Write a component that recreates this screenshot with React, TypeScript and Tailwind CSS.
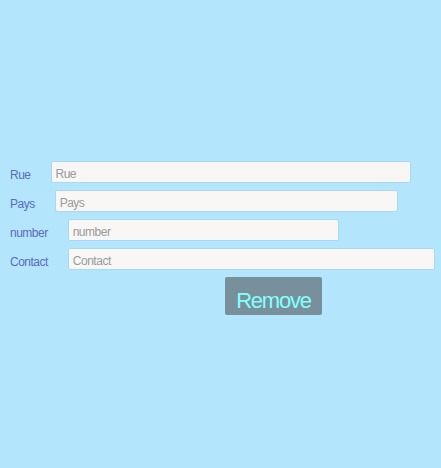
import React from "react";

const rows = [
  { label: "Rue", w: "w-[360px]" },
  { label: "Pays", w: "w-[343px]" },
  { label: "number", w: "w-[271px]" },
  { label: "Contact", w: "w-[367px]" },
];

export default function App() {
  return (
    <div className="w-[441px] h-[468px] bg-[#b3e5fc] font-['Liberation_Sans',Arial,sans-serif] pt-[161px]">
      <div className="flex flex-col gap-[7px] pl-[10px]">
        {rows.map((r) => (
          <div key={r.label} className="flex items-center h-[22px]">
            <span className="text-[12px] tracking-[-0.5px] text-[#5c6bc0] mr-[20px] leading-none pt-[5px]">{r.label}</span>
            <input
              placeholder={r.label}
              className={`${r.w} h-[22px] bg-[#f8f7f5] border border-[#a9d9f1] rounded-[2px] pl-[4px] pt-[4px] text-[12px] tracking-[-0.5px] text-[#555] placeholder:text-[#9a9a9a] outline-none`}
            />
          </div>
        ))}
      </div>
      <div className="pl-[225px] mt-[7px]">
        <button className="w-[97px] h-[38px] bg-[#78909c] rounded-[2px] text-[#84ffff] text-[22px] tracking-[-1.2px] leading-none pt-[9px]">
          Remove
        </button>
      </div>
    </div>
  );
}
